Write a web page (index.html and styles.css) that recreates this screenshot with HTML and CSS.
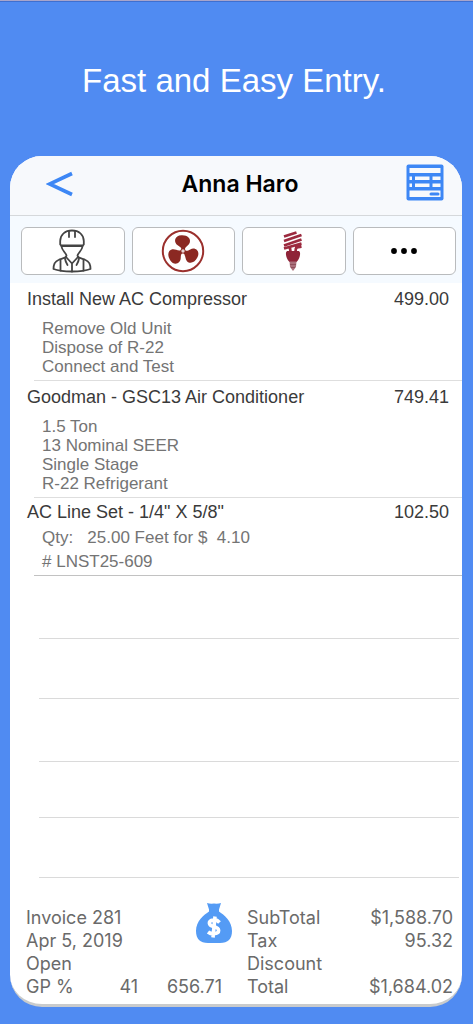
FILE: index.html
```
<!DOCTYPE html>
<html lang="en">
<head>
<meta charset="utf-8">
<meta name="viewport" content="width=device-width, initial-scale=1">
<title>Fast and Easy Entry</title>
<link rel="stylesheet" href="styles.css">
</head>
<body class="page">
<h1 class="headline">Fast and Easy Entry.</h1>
<main class="card">
  <header class="bar">
    <button class="icon-btn back" type="button" aria-label="Back">
      <svg width="28" height="28" viewBox="0 0 28 28"><path d="M26 3.500 3.500 14 26 24.500" fill="none" stroke="#3d87f5" stroke-width="3.600"/></svg>
    </button>
    <h2 class="customer">Anna Haro</h2>
    <button class="icon-btn report" type="button" aria-label="Invoice form">
      <svg width="38" height="37" viewBox="0 0 38 37">
        <rect x="0.500" y="0.500" width="37" height="36" rx="2" fill="#3d87f5"/>
        <g fill="#f7f9fc">
          <rect x="3.500" y="4" width="31" height="5"/>
          <rect x="3.500" y="12.500" width="2.500" height="3.500"/><rect x="9" y="12.500" width="14.500" height="3.500"/><rect x="26.500" y="12.500" width="8" height="3.500"/>
          <rect x="3.500" y="19.500" width="2.500" height="3.500"/><rect x="9" y="19.500" width="14.500" height="3.500"/><rect x="26.500" y="19.500" width="8" height="3.500"/>
          <rect x="3.500" y="26.500" width="31" height="6.500"/>
        </g>
        <rect x="23.500" y="28.500" width="10" height="3" rx="1.500" fill="#3d87f5"/>
      </svg>
    </button>
  </header>
  <nav class="tools" aria-label="Add item">
    <button class="tool" type="button" aria-label="Labor">
      <svg width="40" height="44" viewBox="0 0 40 44" fill="none" stroke="#444" stroke-width="1.800" stroke-linecap="round" stroke-linejoin="round">
        <path d="M8.200 15.500V12C8.500 5.500 13 1.500 20 1.500S31.500 5.500 31.800 12V15.500L30.500 17H9.500Z"/>
        <path d="M17 8V2.500M23 8V2.500M9.500 16.500H30.500"/>
        <path d="M9.500 17.500C10 21.500 13.500 23.500 14.500 26.500C14.500 29 10 29.500 6.500 31C2.500 32.500 1.500 36 1.500 40Q8 42.500 20 42.500T38.500 40C38.500 36 37.500 32.500 33.500 31C30 29.500 25.500 29 25.500 26.500C26.500 23.500 30 21.500 30.500 17.500"/>
        <path d="M14 28 20 34.500 26 28M20 34.500V42.500M8.500 31V41.500M31.500 31V41.500M13 29.500Q13.500 33 15.500 36M27 29.500Q26.500 33 24.500 36"/>
      </svg>
    </button>
    <button class="tool" type="button" aria-label="Equipment">
      <svg width="44" height="44" viewBox="0 0 44 44">
        <circle cx="22" cy="22" r="20.200" fill="none" stroke="#9b302d" stroke-width="2"/>
        <g fill="#8b2822">
          <path id="blade" d="M20.500 21C20.500 18.500 19 17.800 17 16.500C12 13.500 13.500 6.500 20.500 6.300C26.500 6 30 9.500 28.800 13.500C27.800 16.500 24.500 17 23.500 21Z"/>
          <use href="#blade" transform="rotate(120 22 22)"/>
          <use href="#blade" transform="rotate(240 22 22)"/>
          <circle cx="22" cy="22" r="2.600"/>
        </g>
        <circle cx="22" cy="22" r="1.700" fill="#e8d5d4"/>
      </svg>
    </button>
    <button class="tool" type="button" aria-label="Parts">
      <svg width="20" height="40" viewBox="0 0 20 40">
        <g fill="none" stroke="#9c2a3f" stroke-width="2.800">
          <path d="M1 5.500 13.500 1.500M1 10 18.500 4M1 14.500 18.500 8.500M1 17.500 18.500 12.500M12 16.500 18.500 15.500"/>
          <path d="M6 15.500Q7.500 17 7.500 21M14 15.500Q12.500 17 12.500 21"/>
        </g>
        <path d="M4 20H16L17 21.500Q17.500 27 13.500 31H6.500Q2.500 27 3 21.500Z" fill="#8f2438"/>
        <path d="M6.500 30.500H13.500L13 36 10 40 7 36Z" fill="#aa6f7b"/>
        <path d="M7 33.500H13M8 36.500H12" stroke="#8f4f5b"/>
      </svg>
    </button>
    <button class="tool" type="button" aria-label="More">
      <svg width="28" height="8" viewBox="0 0 28 8"><circle cx="4" cy="4" r="2.900"/><circle cx="14" cy="4" r="2.900"/><circle cx="24" cy="4" r="2.900"/></svg>
    </button>
  </nav>
  <ul class="items">
    <li class="item">
      <div class="item-head"><span>Install New AC Compressor</span><span>499.00</span></div>
      <div class="notes"><div>Remove Old Unit</div><div>Dispose of R-22</div><div>Connect and Test</div></div>
    </li>
    <li class="item">
      <div class="item-head"><span>Goodman - GSC13 Air Conditioner</span><span>749.41</span></div>
      <div class="notes"><div>1.5 Ton</div><div>13 Nominal SEER</div><div>Single Stage</div><div>R-22 Refrigerant</div></div>
    </li>
    <li class="item item-part">
      <div class="item-head"><span>AC Line Set - 1/4" X 5/8"</span><span>102.50</span></div>
      <div class="notes"><div>Qty:   25.00 Feet for $  4.10</div><div># LNST25-609</div></div>
    </li>
  </ul>
  <div class="blank" aria-hidden="true">
    <div class="slot slot-tall"></div>
    <div class="slot"></div>
    <div class="slot slot-tall"></div>
    <div class="slot slot-short"></div>
    <div class="slot"></div>
  </div>
  <footer class="summary">
    <div class="invoice">
      <div>Invoice 281</div><div>Apr 5, 2019</div><div>Open</div>
      <div class="profit"><span>GP %</span><span>41</span><span>656.71</span></div>
    </div>
    <button class="icon-btn pay" type="button" aria-label="Payment">
      <svg width="38" height="42" viewBox="0 0 38 42">
        <path d="M12 1Q15 2 19 1.500 23 2 26 1L24 7.500V9.500C29 13 37 19 37 29C37 37 33 41 25 41H13C5 41 1 37 1 29C1 19 9 13 14 9.500V7.500Z" fill="#549bf5"/>
        <path d="M24.500 20.500Q22 17.500 18.500 18C12.500 18.800 13.500 23.500 18.500 24.500C25.500 26 25 31.500 19 31.800Q15.500 32 13 30M20 14.500 18 35.500" fill="none" stroke="#fff" stroke-width="3.600"/>
      </svg>
    </button>
    <dl class="totals">
      <dt>SubTotal</dt><dd>$1,588.70</dd>
      <dt>Tax</dt><dd>95.32</dd>
      <dt>Discount</dt><dd></dd>
      <dt>Total</dt><dd>$1,684.02</dd>
    </dl>
  </footer>
</main>
</body>
</html>
```
FILE: styles.css
```
* { box-sizing: border-box; }
.page {
  margin: 0;
  padding: 0 11px 16px 10px;
  min-height: 100vh;
  background: #508bf2;
  border-top: 1px solid #a9a5cb;
  box-shadow: inset 0 1px #3f6fd0;
  font-family: "Liberation Sans", Arial, sans-serif;
}
.headline {
  margin: 0;
  padding: 60px 4px 55px 0;
  font-size: 33px;
  line-height: 40px;
  font-weight: 400;
  color: #fff;
  text-align: center;
}
.card {
  overflow: hidden;
  border-radius: 32px;
  background: #fff;
  border-bottom: 3px solid #c9cbcc;
}
.bar {
  display: grid;
  grid-template-columns: 64px 1fr 56px;
  align-items: center;
  height: 60px;
  padding-bottom: 3px;
  background: #f7f9fc;
  border-bottom: 1px solid #d5d8db;
}
.icon-btn {
  display: flex;
  padding: 0;
  border: 0;
  background: none;
}
.back { justify-content: flex-end; }
.report { padding-bottom: 4px; }
.customer {
  margin: 0;
  font: 600 23px/28px Inter, sans-serif;
  color: #000;
  text-align: center;
}
.tools {
  display: grid;
  grid-template-columns: repeat(4, 1fr);
  gap: 7px;
  padding: 11px 6px 8px 11px;
  background: #f5faff;
}
.tool {
  display: flex;
  align-items: center;
  justify-content: center;
  height: 48px;
  padding: 0 1px 0 0;
  border: 1px solid #b9bbbd;
  border-radius: 6px;
  background: #fff;
}
.items {
  margin: 0;
  padding: 0 0 0 24px;
  list-style: none;
}
.item {
  padding: 2px 0 4px;
  border-bottom: 1px solid #dedede;
}
.item-head {
  display: flex;
  justify-content: space-between;
  margin-left: -7px;
  padding-right: 13px;
  font-size: 18px;
  line-height: 28px;
  color: #3a3a3a;
}
.notes {
  padding: 6px 0 0 8px;
  font-size: 17px;
  line-height: 19px;
  color: #747474;
  white-space: pre;
}
.item-part {
  padding: 0 0 1px;
  border-bottom-color: #c2c2c2;
}
.item-part .notes {
  padding-top: 0;
  line-height: 24px;
}
.blank { padding: 0 3px 0 29px; }
.slot {
  height: 60px;
  border-bottom: 1px solid #dadada;
}
.slot-tall { height: 63px; }
.slot-short { height: 56px; }
.summary {
  display: grid;
  grid-template-columns: auto 1fr 206px;
  padding: 28px 9px 6px 16px;
  font: 400 18px/23px Inter, sans-serif;
  color: #6a6a6a;
}
.invoice {
  grid-column: 1 / 3;
  grid-row: 1;
}
.profit {
  display: grid;
  grid-template-columns: 64px 48px 84px;
}
.profit span:not(:first-child) { text-align: right; }
.pay {
  grid-column: 2;
  grid-row: 1;
  justify-self: end;
  align-self: start;
  margin: -4px 14px 0 0;
}
.totals {
  grid-column: 3;
  grid-row: 1;
  display: grid;
  grid-template-columns: auto 1fr;
  grid-auto-rows: 23px;
  margin: 0;
}
.totals dd {
  margin: 0;
  text-align: right;
}
```
